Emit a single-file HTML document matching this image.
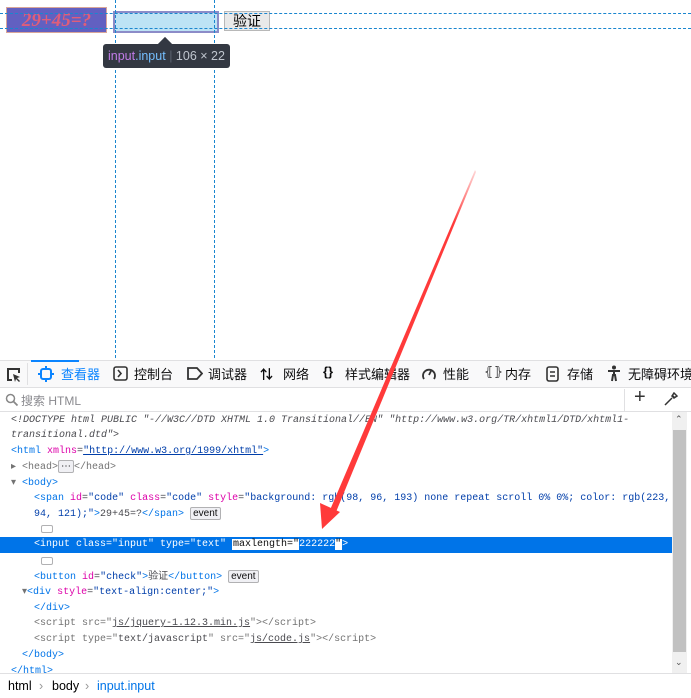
<!DOCTYPE html>
<html><head><meta charset="utf-8"><style>
*{margin:0;padding:0;box-sizing:border-box}
body{width:691px;height:698px;position:relative;overflow:hidden;background:#fff;font-family:"Liberation Sans","Noto Sans CJK SC",sans-serif}
.abs{position:absolute}
.hd{position:absolute;left:0;width:691px;border-top:1px dashed #1a86cf;height:0}
.vd{position:absolute;top:0;height:358px;border-left:1px dashed #1a86cf;width:0}
.tb{position:absolute;top:360px;height:28px;left:0;width:691px;background:#f9f9fa;border-bottom:1px solid #e0e0e2;border-top:1px solid #e0e0e2;font-size:13px;color:#0c0c0d}
.tab{position:absolute;top:3px;white-space:nowrap}
.code{position:absolute;left:0;top:412px;width:672px;height:261px;font-family:"Liberation Mono","Noto Sans CJK SC",monospace;font-size:10px;color:#4a4a4f;overflow:hidden}
.ln{position:absolute;white-space:pre;height:16px;line-height:16px;margin-top:1px}
.t{color:#0074e8}.a{color:#dd00a9}.v{color:#003eaa}.g{color:#737373}
.ev{display:inline-block;font-family:"Liberation Sans",sans-serif;font-size:10px;border:1px solid #b1b1b3;background:#f0f0f4;color:#0c0c0d;padding:0 2px;line-height:11px;border-radius:2px}
.dot{position:absolute;width:12px;height:8px;border:1px solid #b1b1b3;border-radius:2px;background:#fff}
</style></head><body>
<div class="abs" style="left:6px;top:7px;width:101px;height:26px;background:#6260c1;border:1px solid #d9a59a"></div>
<div class="abs" style="left:6px;top:8px;width:101px;height:26px;color:#df5e79;font:italic bold 19px 'Liberation Serif',serif;text-align:center;line-height:26px">29+45=?</div>
<div class="abs" style="left:113px;top:11px;width:106px;height:22px;background:#bde3f5;border:2px solid #8c8cc8"></div>
<div class="abs" style="left:224px;top:11px;width:46px;height:20px;background:#e9e9e9;border:1px solid #b8b8b8;font-size:14px;text-align:center;line-height:18px;color:#000">验证</div>
<div class="hd" style="top:13px"></div>
<div class="hd" style="top:28px"></div>
<div class="vd" style="left:115px"></div>
<div class="vd" style="left:214px"></div>
<div class="abs" style="left:160px;top:39px;width:10px;height:10px;background:#333842;transform:rotate(45deg)"></div>
<div class="abs" style="left:103px;top:44px;width:127px;height:24px;background:#333842;border-radius:3px;font-size:12.5px;line-height:24px;padding-left:5px;color:#bfc5ce;white-space:nowrap"><span style="color:#c07ce8">input</span><span style="color:#75bfff">.input</span> <span style="color:#5c6370">|</span> 106 × 22</div>
<div class="tb">
<div class="abs" style="left:31px;top:-1px;width:48px;height:2px;background:#0a84ff"></div>
<div class="abs" style="left:27px;top:2px;width:1px;height:22px;background:#e0e0e2"></div>
<svg class="abs" style="left:6px;top:6px" width="16" height="16"><path d="M6 13H2V2h11v4" fill="none" stroke="#333" stroke-width="2"/><path d="M7 7l7 3-3 1 3 3-1 1-3-3-1 3z" fill="#333"/></svg>
<svg class="abs" style="left:38px;top:5px" width="16" height="16"><rect x="3" y="3" width="10" height="10" rx="2" fill="none" stroke="#0a84ff" stroke-width="2"/><path d="M8 0v3M8 13v3M0 8h3M13 8h3" stroke="#0a84ff" stroke-width="2"/></svg>
<div class="tab" style="left:61px;color:#0a84ff">查看器</div>
<svg class="abs" style="left:113px;top:5px" width="15" height="15"><rect x="1" y="1" width="13" height="13" rx="2" fill="none" stroke="#333" stroke-width="1.6"/><path d="M5 4l3 3.5-3 3.5" fill="none" stroke="#333" stroke-width="1.6"/></svg>
<div class="tab" style="left:134px">控制台</div>
<svg class="abs" style="left:187px;top:6px" width="16" height="13"><path d="M1 1h9l5 5.5-5 5.5H1z" fill="none" stroke="#333" stroke-width="1.8"/></svg>
<div class="tab" style="left:208px">调试器</div>
<div class="tab" style="left:260px;font-weight:bold">⇅</div>
<div class="tab" style="left:283px">网络</div>
<div class="tab" style="left:323px;font-weight:bold">{}</div>
<div class="tab" style="left:345px">样式编辑器</div>
<svg class="abs" style="left:421px;top:5px" width="16" height="16"><path d="M3 13A6 6 0 1 1 13 13" fill="none" stroke="#333" stroke-width="1.8"/><path d="M8 9l2-4" stroke="#333" stroke-width="1.8"/></svg>
<div class="tab" style="left:443px">性能</div>
<div class="tab" style="left:484px">⦃⦄</div>
<div class="tab" style="left:505px">内存</div>
<svg class="abs" style="left:546px;top:5px" width="13" height="16"><rect x="1" y="1" width="11" height="14" rx="2" fill="none" stroke="#333" stroke-width="1.6"/><path d="M4 6h5M4 10h5" stroke="#333" stroke-width="1.6"/></svg>
<div class="tab" style="left:567px">存储</div>
<svg class="abs" style="left:607px;top:4px" width="14" height="17"><circle cx="7" cy="2.5" r="2" fill="#333"/><path d="M1 6h12M7 6v5M5 16l1-6h2l1 6" stroke="#333" stroke-width="2" fill="none"/></svg>
<div class="tab" style="left:628px">无障碍环境</div>
</div>
<div class="abs" style="left:0;top:389px;width:691px;height:23px;border-bottom:1px solid #e0e0e2"></div>
<svg class="abs" style="left:5px;top:393px" width="14" height="14"><circle cx="5.5" cy="5.5" r="4" fill="none" stroke="#888" stroke-width="1.5"/><path d="M8.5 8.5l4 4" stroke="#888" stroke-width="1.8"/></svg>
<div class="abs" style="left:21px;top:392px;font-size:12px;color:#8a8a8f">搜索 HTML</div>
<div class="abs" style="left:624px;top:389px;width:1px;height:22px;background:#e0e0e2"></div>
<div class="abs" style="left:634px;top:386px;font-size:20px;color:#333">+</div>
<svg class="abs" style="left:663px;top:392px" width="15" height="15"><path d="M2 13l7-7M9 3l3 3M11 1l3 3-3 2-2-2z" stroke="#333" stroke-width="1.5" fill="none"/></svg>
<div class="code">
<div class="ln" style="left:11px;top:0px;font-style:italic">&lt;!DOCTYPE html PUBLIC "-//W3C//DTD XHTML 1.0 Transitional//EN" "http://www.w3.org/TR/xhtml1/DTD/xhtml1-</div>
<div class="ln" style="left:11px;top:15px;font-style:italic">transitional.dtd"&gt;</div>
<div class="ln" style="left:11px;top:31px"><span class="t">&lt;html</span> <span class="a">xmlns</span>=<span class="v" style="text-decoration:underline">"http://www.w3.org/1999/xhtml"</span><span class="t">&gt;</span></div>
<div class="ln g" style="left:11px;top:47px">▸ &lt;head&gt;<span class="ev">⋯</span>&lt;/head&gt;</div>
<div class="ln" style="left:11px;top:63px"><span class="g">▾</span> <span class="t">&lt;body&gt;</span></div>
<div class="ln" style="left:34px;top:78px"><span class="t">&lt;span</span> <span class="a">id</span>=<span class="v">"code"</span> <span class="a">class</span>=<span class="v">"code"</span> <span class="a">style</span>=<span class="v">"background: rgb(98, 96, 193) none repeat scroll 0% 0%; color: rgb(223,</span></div>
<div class="ln" style="left:34px;top:94px"><span class="v">94, 121);"</span><span class="t">&gt;</span>29+45=?<span class="t">&lt;/span&gt;</span> <span class="ev">event</span></div>
<div class="dot" style="left:41px;top:113px"></div>
<div class="abs" style="left:0;top:125px;width:672px;height:16px;background:#0074e8"></div>
<div class="ln" style="left:34px;top:124px;color:#fff">&lt;input class="input" type="text" <span style="background:#fff;color:#0c0c0d;padding:0 1px">maxlength="<span style="background:#0074e8;color:#fff">222222</span>"</span>&gt;</div>
<div class="dot" style="left:41px;top:145px"></div>
<div class="ln" style="left:34px;top:157px"><span class="t">&lt;button</span> <span class="a">id</span>=<span class="v">"check"</span><span class="t">&gt;</span>验证<span class="t">&lt;/button&gt;</span> <span class="ev">event</span></div>
<div class="ln" style="left:22px;top:172px"><span class="g">▾</span><span class="t">&lt;div</span> <span class="a">style</span>=<span class="v">"text-align:center;"</span><span class="t">&gt;</span></div>
<div class="ln t" style="left:34px;top:188px">&lt;/div&gt;</div>
<div class="ln g" style="left:34px;top:203px">&lt;script src="<span style="color:#4a4a4f;text-decoration:underline">js/jquery-1.12.3.min.js</span>"&gt;&lt;/script&gt;</div>
<div class="ln g" style="left:34px;top:219px">&lt;script type="<span style="color:#4a4a4f">text/javascript</span>" src="<span style="color:#4a4a4f;text-decoration:underline">js/code.js</span>"&gt;&lt;/script&gt;</div>
<div class="ln t" style="left:22px;top:235px">&lt;/body&gt;</div>
<div class="ln t" style="left:11px;top:251px">&lt;/html&gt;</div>
</div>
<div class="abs" style="left:672px;top:412px;width:15px;height:261px;background:#f0f0f0"></div>
<div class="abs" style="left:673px;top:430px;width:13px;height:222px;background:#c1c1c1"></div>
<div class="abs" style="left:675px;top:414px;font-size:9px;color:#555">⌃</div>
<div class="abs" style="left:675px;top:657px;font-size:9px;color:#555">⌄</div>
<div class="abs" style="left:0;top:673px;width:691px;height:25px;background:#fff;border-top:1px solid #e0e0e2;font-size:12.5px;line-height:24px;white-space:nowrap">
<span style="position:absolute;left:8px">html</span><span style="position:absolute;left:39px;color:#999">›</span><span style="position:absolute;left:52px">body</span><span style="position:absolute;left:85px;color:#999">›</span><span style="position:absolute;left:97px;color:#0074e8">input.input</span></div>
<svg class="abs" style="left:0;top:0" width="691" height="698"><defs><linearGradient id="gr" x1="475" y1="170" x2="330" y2="520" gradientUnits="userSpaceOnUse"><stop offset="0" stop-color="#ff3a3a" stop-opacity="0.2"/><stop offset="0.15" stop-color="#ff3a3a"/><stop offset="1" stop-color="#ff3a3a"/></linearGradient></defs>
<polygon points="475,170 476,172 336,512 330,510" fill="url(#gr)"/>
<polygon points="322,529 320,503 340,512" fill="#ff3a3a"/></svg>
</body></html>
